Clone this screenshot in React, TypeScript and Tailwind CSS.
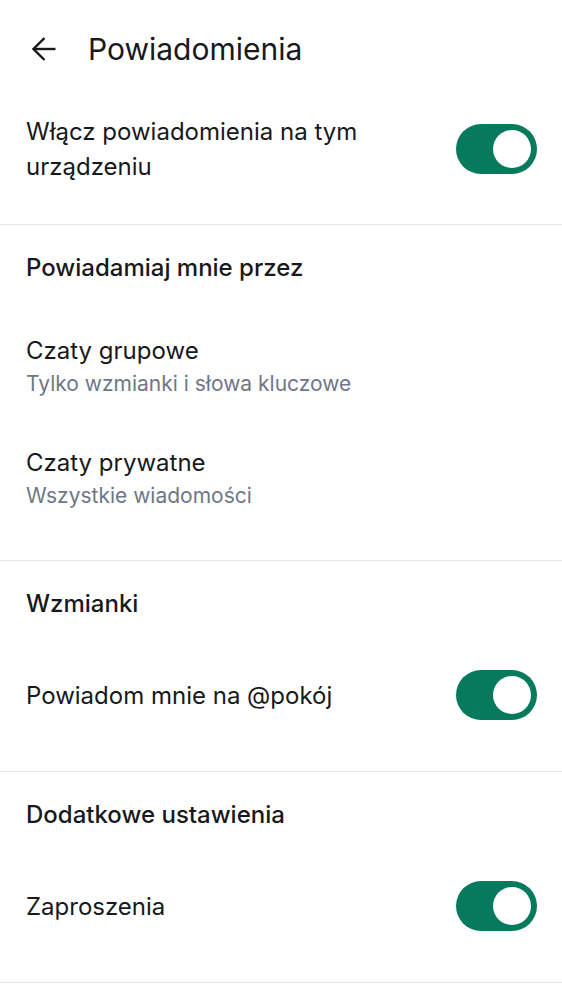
const font = { fontFamily: "Inter, Roboto, 'Noto Sans', sans-serif" };

const Toggle = () => (
  <div className="flex h-[50px] w-[81px] shrink-0 items-center justify-end rounded-full bg-[#067a5d] pr-[6px]">
    <div className="h-[38px] w-[38px] rounded-full bg-white" />
  </div>
);

const SectionHeader = ({ title }: { title: string }) => (
  <div className="flex h-[84px] items-center px-[26px] pt-[2px]">
    <span className="text-[24px] font-medium leading-[32px] text-[#17191c]">{title}</span>
  </div>
);

const LinkItem = ({ title, subtitle }: { title: string; subtitle: string }) => (
  <div className="flex h-[112px] flex-col justify-center px-[26px] pt-[4px]">
    <span className="text-[24px] leading-[33px] text-[#17191c]">{title}</span>
    <span className="text-[21px] leading-[34px] text-[#6f7785]">{subtitle}</span>
  </div>
);

const ToggleRow = ({ label }: { label: string }) => (
  <div className="flex h-[100px] items-center justify-between pl-[26px] pr-[25px]">
    <span className="text-[24px] leading-[33px] text-[#17191c]">{label}</span>
    <Toggle />
  </div>
);

export default function App() {
  return (
    <div className="min-h-[1000px] w-full bg-white" style={font}>
      <header className="flex h-[98px] items-center">
        <div className="flex w-[88px] items-center pl-[32px]">
          <svg width="24" height="24" viewBox="0 0 24 24" fill="none" stroke="#17191c" strokeWidth="2.4" strokeLinecap="butt">
            <path d="M23.5 12H1.5" />
            <path d="M12.5 1L1.5 12l11 11" />
          </svg>
        </div>
        <h1 className="text-[30px] leading-[36px] text-[#17191c]">Powiadomienia</h1>
      </header>

      <div className="flex items-center justify-between border-b border-[#e4e6ea] pb-[40px] pl-[26px] pr-[25px] pt-[16px]">
        <span className="w-[380px] text-[24px] leading-[35px] text-[#17191c]">
          Włącz powiadomienia na tym urządzeniu
        </span>
        <Toggle />
      </div>

      <section className="border-b border-[#e4e6ea] pb-[27px]">
        <SectionHeader title="Powiadamiaj mnie przez" />
        <LinkItem title="Czaty grupowe" subtitle="Tylko wzmianki i słowa kluczowe" />
        <LinkItem title="Czaty prywatne" subtitle="Wszystkie wiadomości" />
      </section>

      <section className="border-b border-[#e4e6ea] pb-[26px]">
        <SectionHeader title="Wzmianki" />
        <ToggleRow label="Powiadom mnie na @pokój" />
      </section>

      <section className="border-b border-[#e4e6ea] pb-[26px]">
        <SectionHeader title="Dodatkowe ustawienia" />
        <ToggleRow label="Zaproszenia" />
      </section>
    </div>
  );
}
